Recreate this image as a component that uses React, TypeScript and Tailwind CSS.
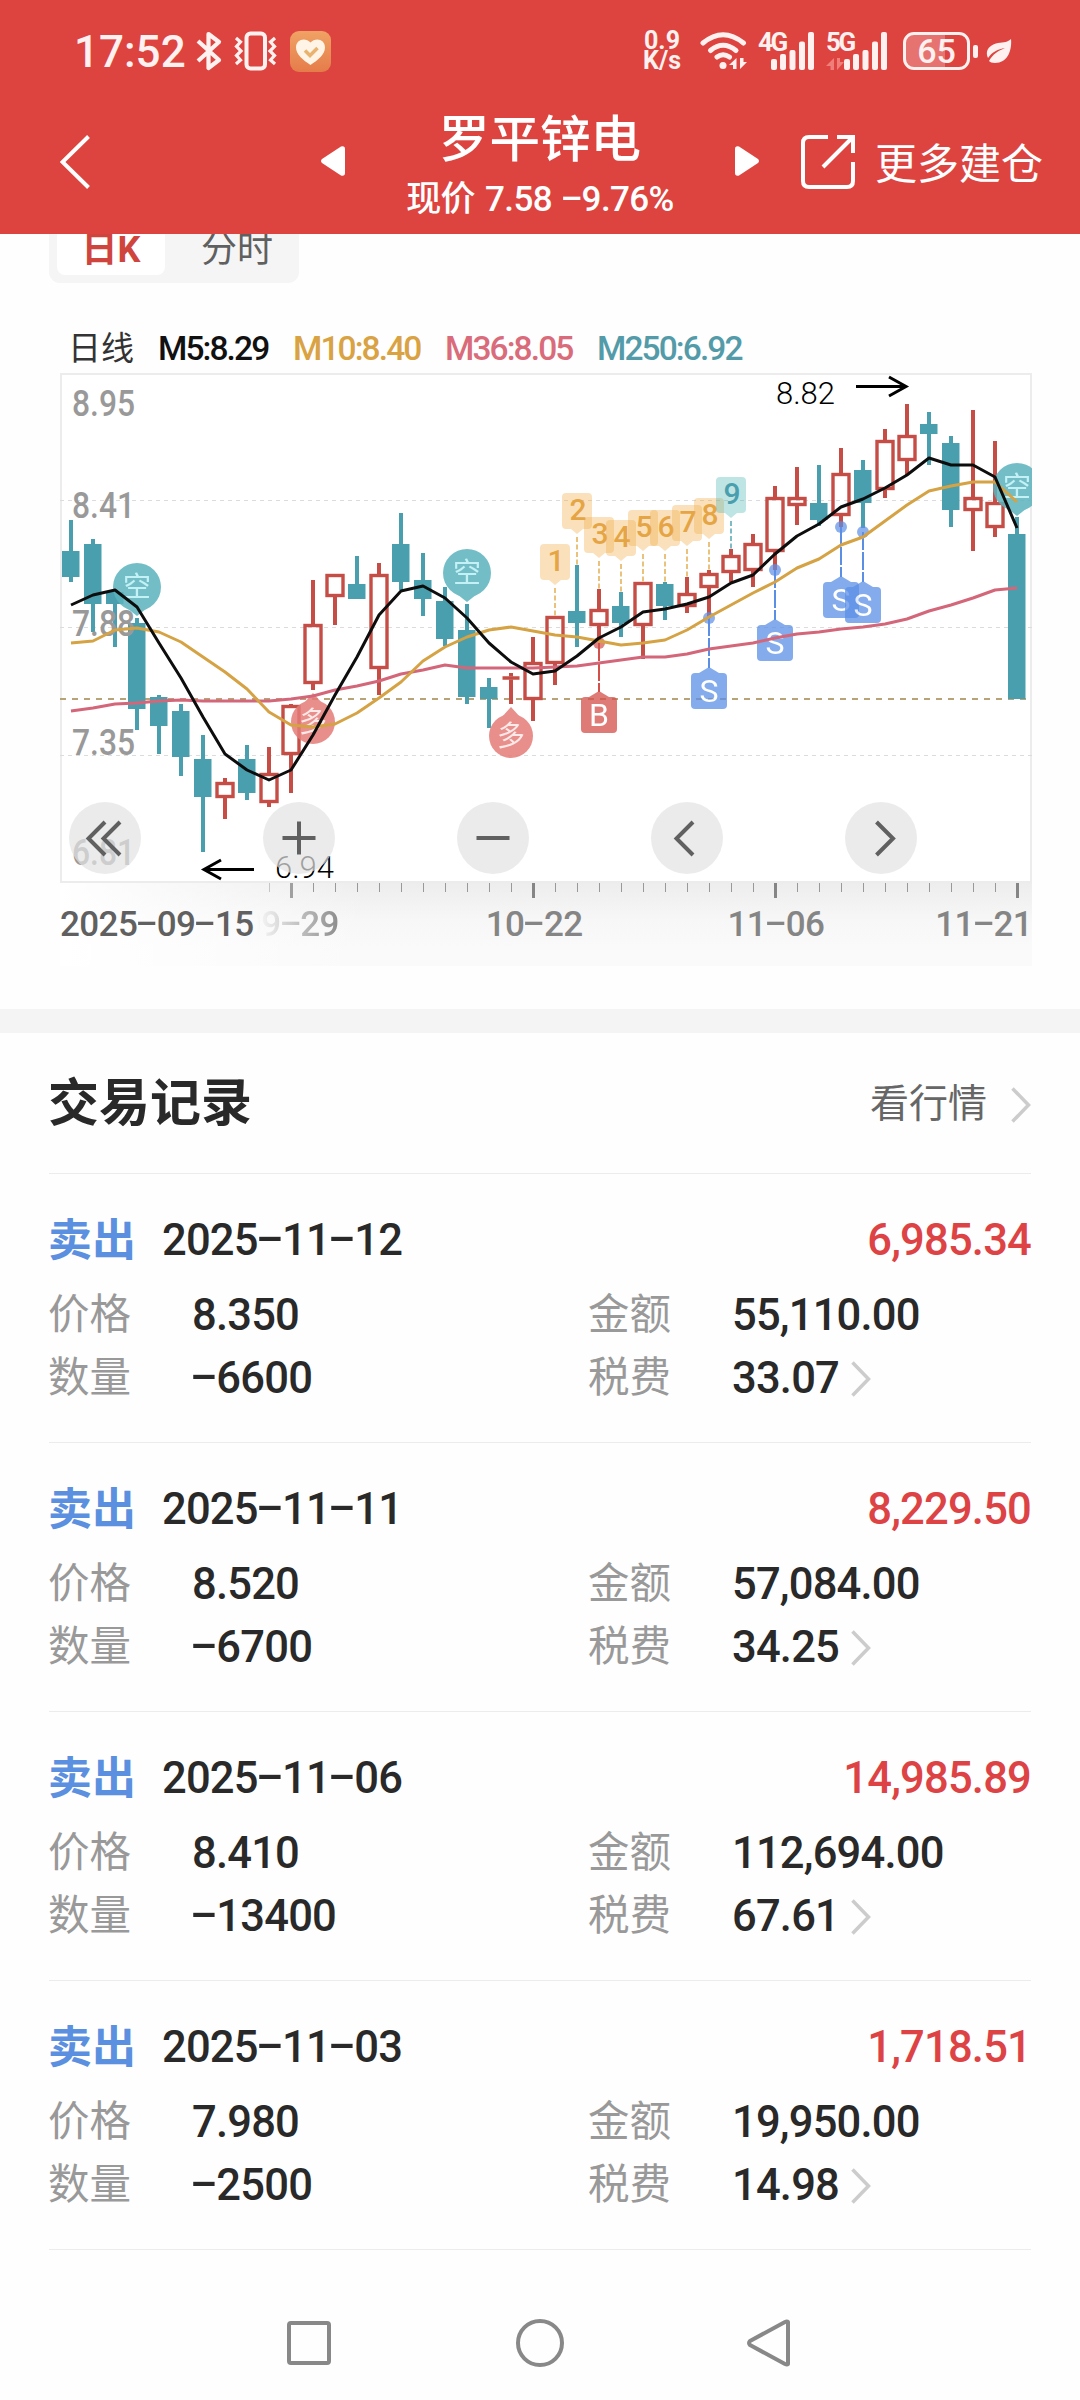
import { Fragment } from "react";

type Candle = [high: number, top: number, bottom: number, low: number, up: boolean];

const candles: Candle[] = [
  [520, 551, 577, 582, false],
  [539, 544, 604, 632, false],
  [590, 592, 604, 647, false],
  [618, 623, 709, 730, false],
  [695, 697, 726, 754, false],
  [704, 711, 757, 776, false],
  [735, 759, 797, 852, false],
  [778, 782, 798, 819, true],
  [745, 759, 793, 800, false],
  [747, 773, 803, 807, true],
  [704, 705, 755, 793, true],
  [580, 624, 684, 690, true],
  [574, 574, 597, 625, true],
  [556, 584, 599, 599, false],
  [563, 574, 669, 695, true],
  [513, 544, 582, 590, false],
  [553, 580, 599, 616, false],
  [587, 601, 639, 646, false],
  [604, 630, 697, 704, false],
  [678, 687, 699, 728, false],
  [673, 676.5, 679.5, 704, true],
  [637, 662, 700, 721, true],
  [616, 616, 664, 685, true],
  [565, 611, 623, 647, false],
  [589, 609, 626, 640, true],
  [592, 606, 623, 637, false],
  [582, 582, 626, 659, true],
  [582, 584, 606, 620, false],
  [577, 593, 607, 613, true],
  [570, 573, 588, 618, true],
  [549, 555, 573, 582, true],
  [534, 543, 571, 587, true],
  [486, 497, 552, 570, true],
  [467, 497, 506, 525, true],
  [465, 503, 520, 526, false],
  [448, 473, 516, 527, true],
  [460, 470, 503, 528, false],
  [429, 440, 490, 498, true],
  [404, 435, 461, 475, true],
  [412, 424, 434, 465, false],
  [436, 443, 510, 527, false],
  [410, 497, 511, 551, true],
  [441, 502, 528, 537, true],
  [517, 534, 699, 699, false],
];

const ma5 = [
  605, 595, 590, 607, 643, 678, 717, 754, 770, 780, 770, 735, 695, 657, 615, 591, 586, 598, 618, 643, 662, 674,
  671, 656, 638, 627, 612, 609, 604, 597, 583, 575, 554, 536, 524, 507, 499, 488, 475, 458, 465, 465, 477, 528,
];
const ma10 = [
  643, 641, 630, 628, 632, 642, 657, 672, 689, 712, 725, 727, 724, 713, 698, 682, 661, 647, 637, 630, 627, 631,
  635, 637, 641, 645, 643, 640, 630, 617, 605, 593, 582, 568, 559, 545, 537, 521, 505, 491, 486, 482, 482, 502,
];
const ma36 = [
  711, 708, 704, 703, 701, 700, 701, 701, 701, 701, 699, 696, 690, 686, 681, 674, 670, 665, 668, 668, 668, 668,
  667, 666, 663, 660, 657, 657, 654, 649, 646, 643, 638, 634, 632, 629, 627, 624, 619, 611, 605, 598, 590, 588,
];

const priceLabels = [
  { text: "8.95", y: 416 },
  { text: "8.41", y: 518 },
  { text: "7.88", y: 636 },
  { text: "7.35", y: 755 },
  { text: "6.81", y: 865 },
];

const counters = [
  { i: 22, n: 1 },
  { i: 23, n: 2 },
  { i: 24, n: 3 },
  { i: 25, n: 4 },
  { i: 26, n: 5 },
  { i: 27, n: 6 },
  { i: 28, n: 7 },
  { i: 29, n: 8 },
  { i: 30, n: 9 },
];

const tradeMarks = [
  { i: 24, dot: 643, box: 697, text: "B" },
  { i: 29, dot: 618, box: 673, text: "S" },
  { i: 32, dot: 570, box: 625, text: "S" },
  { i: 35, dot: 527, box: 582, text: "S" },
  { i: 36, dot: 532, box: 587, text: "S" },
];

const trades = [
  { date: "2025-11-12", profit: "6,985.34", price: "8.350", amount: "55,110.00", qty: "-6600", fee: "33.07" },
  { date: "2025-11-11", profit: "8,229.50", price: "8.520", amount: "57,084.00", qty: "-6700", fee: "34.25" },
  { date: "2025-11-06", profit: "14,985.89", price: "8.410", amount: "112,694.00", qty: "-13400", fee: "67.61" },
  { date: "2025-11-03", profit: "1,718.51", price: "7.980", amount: "19,950.00", qty: "-2500", fee: "14.98" },
];

const px = (i: number) => 71 + i * 22;
const line = (values: number[]) => values.map((y, i) => `${px(i)},${y}`).join(" ");

// Digits are tabular, so the hyphen takes the width of a digit as well
function Num({ children }: { children: string }) {
  return (
    <span className="whitespace-nowrap">
      {children.split("-").map((part, i) => (
        <Fragment key={i}>
          {i > 0 && (
            <span className="inline-block w-[0.56em] -translate-y-[0.06em] scale-x-[1.9] text-center tracking-normal">
              -
            </span>
          )}
          {part}
        </Fragment>
      ))}
    </span>
  );
}

function Chevron() {
  return (
    <svg width="20" height="36" viewBox="0 0 20 36" fill="none" stroke="#cccccc" strokeWidth="3.5">
      <path d="M1.5 1.5L17.5 18L1.5 34.5" />
    </svg>
  );
}

function SignalBars() {
  return (
    <svg width="44" height="38" viewBox="0 0 44 38" fill="#fff1f0">
      <rect x="0" y="27" width="6" height="11" rx="2" />
      <rect x="9" y="22" width="6" height="16" rx="2" />
      <rect x="18.500" y="18" width="6" height="20" rx="2" />
      <rect x="28" y="9.500" width="6" height="28.500" rx="2" />
      <rect x="37" y="0" width="6" height="38" rx="2" />
    </svg>
  );
}

function StatusBar() {
  return (
    <div className="flex h-[102px] items-center pl-[74px] text-[#fff1f0]">
      <span className="w-[122px] pt-[2px] text-[44px] font-medium">17:52</span>
      <svg width="26" height="40" viewBox="0 0 26 40" fill="none" stroke="#fff1f0" strokeWidth="4.200" strokeLinejoin="round">
        <path d="M2 10L23 29L12.500 37V3L23 11L2 30" />
      </svg>
      <svg className="ml-3" width="43" height="40" viewBox="0 0 43 40" fill="none" stroke="#fff1f0" strokeWidth="4">
        <rect x="12.500" y="2.500" width="18.500" height="35" rx="4" />
        <path d="M2 7L6.500 11L2.500 15.500L7 20L2.500 24.500L6.500 29L2 33M41 7L36.500 11L40.500 15.500L36 20L40.500 24.500L36.500 29L41 33" strokeWidth="3.200" />
      </svg>
      <svg className="ml-[13px]" width="41" height="41" viewBox="0 0 41 41">
        <defs>
          <linearGradient id="badge" x1="0" y1="0" x2="0" y2="1">
            <stop offset="0" stopColor="#f0a264" />
            <stop offset="1" stopColor="#e57c4a" />
          </linearGradient>
        </defs>
        <rect width="41" height="41" rx="9" fill="url(#badge)" />
        <path d="M20.500 34C13 29 6 23.500 6 16.500C6 8 15.500 6 20.500 11.500C25.500 6 35 8 35 16.500C35 23.500 28 29 20.500 34Z" fill="#fff4e6" />
        <path d="M15 19.500L20 24.500L27.500 17" fill="none" stroke="#eab26f" strokeWidth="3.500" />
      </svg>

      <div className="ml-[311px] flex w-[40px] flex-col items-center text-[25px] leading-[20px] font-bold">
        <span>0.9</span>
        <span>K/s</span>
      </div>
      <svg className="ml-[18px]" width="47" height="38" viewBox="0 0 47 38" fill="none" stroke="#fff1f0" strokeLinecap="round" strokeWidth="5">
        <path d="M3 11Q23 -5.500 43.500 11" />
        <path d="M10.500 18.500Q23 8 36 18.500" />
        <path d="M17 25Q23 20.500 29.500 25" />
        <circle cx="23" cy="33.500" r="3.500" fill="#fff1f0" stroke="none" />
        <path d="M36.500 26V37H33V33H29ZM40 37V26H43.500V30H47Z" fill="#fff1f0" stroke="none" />
      </svg>
      <span className="ml-[11px] w-[13px] -translate-y-[9px] text-[26px] leading-none font-bold tracking-[-2.500px]">4G</span>
      <SignalBars />
      <div className="ml-[11px] flex h-[38px] w-[18px] flex-col justify-between">
        <span className="-mt-[3px] text-[26px] leading-[26px] font-bold tracking-[-2.500px]">5G</span>
        <svg width="18" height="13" viewBox="0 0 18 13" fill="#f07f7a">
          <path d="M8 1V13H4.500V9H0ZM11 13V1H14V5H18Z" />
        </svg>
      </div>
      <SignalBars />
      <div className="ml-[15px] flex h-[38px] w-[67px] items-center justify-center rounded-[11px] border-[3.500px] border-[#fff1f0] bg-[linear-gradient(90deg,#e77370_64%,transparent_64%)] text-[34px] font-medium">
        65
      </div>
      <div className="ml-[3px] h-[13px] w-[5px] rounded-[2px] bg-[#fff1f0]" />
      <svg className="ml-2" width="26" height="25" viewBox="0 0 26 25">
        <path d="M25 0C26 9 23 24 9 24C6 24 4 23 3 22C7 15 12 12 19 9C12 10 6 13 2 19C-2 11 5 5 12 4C18 3.500 22 3 25 0Z" fill="#fff1f0" />
      </svg>
    </div>
  );
}

function Header() {
  return (
    <header className="relative z-10 h-[234px] bg-[#dd443f] text-white">
      <StatusBar />
      <div className="flex h-[132px] pl-[60px]">
        <svg className="mt-[33px]" width="31" height="54" viewBox="0 0 31 54" fill="none" stroke="#fff" strokeWidth="4">
          <path d="M28.500 1.500L2.500 27L28.500 52.500" />
        </svg>
        <svg className="mt-[44px] ml-[230px]" width="24" height="30" viewBox="0 0 24 30" fill="#fff">
          <path d="M1 13L20 0.500Q24 -0.500 24 3V27Q24 30.500 20 29.500L1 17Q-1 15 1 13Z" />
        </svg>
        <div className="flex w-[390px] flex-col items-center">
          <h1 className="mt-[5px] text-[50.500px] leading-[66px] font-medium">罗平锌电</h1>
          <div className="flex items-center gap-[10px] text-[35px] leading-[54px] font-medium tracking-[-0.600px]">
            <span>现价</span>
            <Num>7.58</Num>
            <Num>-9.76%</Num>
          </div>
        </div>
        <svg className="mt-[44px]" width="24" height="30" viewBox="0 0 24 30" fill="#fff">
          <path d="M23 13L4 0.500Q0 -0.500 0 3V27Q0 30.500 4 29.500L23 17Q25 15 23 13Z" />
        </svg>
        <svg className="mt-[33px] ml-[42px]" width="54" height="54" viewBox="0 0 54 54" fill="none" stroke="#fff" strokeWidth="4">
          <path d="M27 2H8Q2 2 2 8V46Q2 52 8 52H46Q52 52 52 46V27M36 2H52V18M52 2L22 32" />
        </svg>
        <span className="mt-[34px] ml-[20px] text-[42px] leading-[58px] whitespace-nowrap">更多建仓</span>
      </div>
    </header>
  );
}

function Bubble({ x, y, text }: { x: number; y: number; text: string }) {
  const short = text === "空";
  return (
    <g opacity="0.85">
      <path
        d={short ? `M${x - 14} ${y + 18}L${x} ${y + 29}L${x + 14} ${y + 18}Z` : `M${x - 10} ${y - 18}L${x} ${y - 29}L${x + 10} ${y - 18}Z`}
        fill={short ? "#5bb3bd" : "#e47c79"}
      />
      <circle cx={x} cy={y} r={short ? 24 : 22} fill={short ? "#5bb3bd" : "#e47c79"} />
      <text x={x} y={y + 10} textAnchor="middle" fontSize="28" fill={short ? "#b9eff5" : "#fde6e4"}>
        {text}
      </text>
    </g>
  );
}

function KLineChart() {
  return (
    <svg className="block" width="972" height="510" viewBox="60 373 972 510">
      <rect x="61" y="374" width="970" height="508" fill="#fff" stroke="#ececec" strokeWidth="2" />
      <g stroke="#dcdcdc" strokeWidth="1" strokeDasharray="4 4">
        <path d="M60 500.500H1032" />
        <path d="M60 627.500H1032" />
        <path d="M60 755.500H1032" />
      </g>
      <path d="M60 699H1032" stroke="#b8a376" strokeWidth="2" strokeDasharray="6 6" />

      {candles.map(([high, top, bottom, low, up], i) =>
        up ? (
          <g key={i} stroke="#c54d46" fill="none">
            <path d={`M${px(i)} ${high}V${top}M${px(i)} ${bottom}V${low}`} strokeWidth="4" />
            {bottom - top > 4 ? (
              <rect x={px(i) - 8} y={top + 1.5} width="16" height={bottom - top - 3} strokeWidth="3.400" />
            ) : (
              <path d={`M${px(i) - 8.5} ${top + 1.5}h17M${px(i)} ${top}V${bottom}`} strokeWidth="3.400" />
            )}
          </g>
        ) : (
          <g key={i} fill="#4a9fae">
            <rect x={px(i) - 2} y={high} width="4" height={low - high} />
            <rect x={px(i) - 9} y={top} width="17.500" height={bottom - top} />
          </g>
        ),
      )}

      {priceLabels.map((p) => (
        <text key={p.text} x="72" y={p.y} fontSize="36" fontWeight="500" fill="#999999" textLength="63" lengthAdjust="spacingAndGlyphs">
          {p.text}
        </text>
      ))}

      <Bubble x={137} y={587} text="空" />
      <Bubble x={467} y={573} text="空" />
      <Bubble x={1017} y={487} text="空" />
      <Bubble x={313} y={722} text="多" />
      <Bubble x={511} y={736} text="多" />

      {counters.map(({ i, n }) => {
        const x = px(i);
        const y = candles[i][0] - 72;
        const last = n === 9;
        return (
          <g key={n}>
            <path
              d={`M${x - 11} ${y}H${x + 11}Q${x + 15} ${y} ${x + 15} ${y + 4}V${y + 32}Q${x + 15} ${y + 36} ${x + 11} ${y + 36}H${x + 6}L${x} ${y + 41}L${x - 6} ${y + 36}H${x - 11}Q${x - 15} ${y + 36} ${x - 15} ${y + 32}V${y + 4}Q${x - 15} ${y} ${x - 11} ${y}Z`}
              fill={last ? "#4db3b5" : "#f0ad45"}
              opacity="0.36"
            />
            <text x={x + 1} y={y + 27} textAnchor="middle" fontSize="30" fontWeight="500" fill={last ? "#4a9fae" : "#e6a545"}>
              {n}
            </text>
            <path d={`M${x} ${y + 44}V${y + 72}`} stroke={last ? "#7dbcc5" : "#eac27c"} strokeWidth="2" strokeDasharray="5 2.500" />
          </g>
        );
      })}

      {tradeMarks.map(({ i, dot, box, text }) => {
        const x = px(i);
        const color = text === "B" ? "#d44f4a" : "#5b8fe6";
        return (
          <g key={i}>
            <circle cx={x} cy={dot} r="6" fill={color} opacity="0.7" />
            <path d={`M${x} ${dot}V${box - 5}`} stroke={color} strokeWidth="2" strokeDasharray="18 2" />
            <g opacity="0.75">
              <rect x={x - 18} y={box} width="36" height="36" rx="4" fill={color} />
              <path d={`M${x - 10} ${box}L${x} ${box - 6}L${x + 10} ${box}Z`} fill={color} />
              <text x={x} y={box + 29} textAnchor="middle" fontSize="32" fill="#fff">
                {text}
              </text>
            </g>
          </g>
        );
      })}

      <g fill="none" strokeWidth="3" strokeLinejoin="round">
        <polyline points={line(ma36)} stroke="#d4667a" />
        <polyline points={line(ma10)} stroke="#d5a244" />
        <polyline points={line(ma5)} stroke="#0d0d0d" />
      </g>

      <g fill="none" stroke="#000" strokeWidth="3">
        <path d="M856 386.500H906M889 377L906 386.500L889 396" />
        <path d="M254 869.500H204M221 860L204 869.500L221 879" />
      </g>
      <text x="776" y="403.500" fontSize="32" fontWeight="300" fill="#000" textLength="59" lengthAdjust="spacingAndGlyphs">
        8.82
      </text>
      <text x="275" y="878" fontSize="32" fontWeight="300" fill="#000" textLength="59" lengthAdjust="spacingAndGlyphs">
        6.94
      </text>

      {[105, 299, 493, 687, 881].map((x) => (
        <circle key={x} cx={x} cy="838" r="36" fill="#e3e3e3" opacity="0.7" />
      ))}
      <g fill="none" stroke="#606060" strokeWidth="4">
        <path d="M105 822L88.500 838.500L105 855M120 822L103.500 838.500L120 855" />
        <path d="M282.500 838H315.500M299 821.500V854.500" />
        <path d="M476.500 838H509.500" />
        <path d="M693 822L676.500 838.500L693 855" />
        <path d="M876.500 822L893 838.500L876.500 855" />
      </g>
    </svg>
  );
}

function TimeAxis() {
  return (
    <div className="h-[83px] bg-[linear-gradient(90deg,#fff,transparent_32%),linear-gradient(180deg,#ededed,#f7f7f7_45%,#fafafa_80%)]">
      <svg className="block" width="972" height="16" viewBox="60 883 972 16">
        {candles.map((_, i) =>
          i < 9 ? null : (i - 10) % 11 === 0 ? (
            <path key={i} d={`M${px(i) + 0.5} 883V898`} stroke="#858585" strokeWidth="3" opacity={i === 10 ? 0.75 : 1} />
          ) : (
            <path key={i} d={`M${px(i) + 0.5} 883V892`} stroke="#999999" strokeWidth="1" opacity={i === 9 ? 0.5 : 1} />
          ),
        )}
      </svg>
      <div className="flex pt-[6px] text-[35px] leading-[40px] font-medium tracking-[-0.600px] text-[#858585]">
        <div className="w-[182px] text-[#606060]">
          <Num>2025-09-15</Num>
        </div>
        <div className="w-[244px] [mask-image:linear-gradient(90deg,transparent_6%,black_42%)]">
          <Num>09-29</Num>
        </div>
        <div className="w-[242px]">
          <Num>10-22</Num>
        </div>
        <div className="w-[208px]">
          <Num>11-06</Num>
        </div>
        <Num>11-21</Num>
      </div>
    </div>
  );
}

function TradeRow({ trade }: { trade: (typeof trades)[number] }) {
  return (
    <div className="h-[269px] border-b border-[#ececec] pt-[35px] text-[43.500px] font-medium tracking-[-0.800px] text-[#292929]">
      <div className="flex h-[64px] items-center">
        <span className="-ml-px w-[114px] text-[44px] font-bold tracking-normal text-[#5b8fdf]">卖出</span>
        <Num>{trade.date}</Num>
        <span className="ml-auto text-[#dd4345]">{trade.profit}</span>
      </div>
      <div className="mt-[11px] grid grid-cols-[143px_397px_143px_1fr] auto-rows-[63px] items-center">
        <span className="-ml-px text-[41.500px] font-normal tracking-normal text-[#999999]">价格</span>
        <span>{trade.price}</span>
        <span className="-ml-px text-[41.500px] font-normal tracking-normal text-[#999999]">金额</span>
        <span>{trade.amount}</span>
        <span className="-ml-px text-[41.500px] font-normal tracking-normal text-[#999999]">数量</span>
        <Num>{trade.qty}</Num>
        <span className="-ml-px text-[41.500px] font-normal tracking-normal text-[#999999]">税费</span>
        <span className="flex items-center gap-3">
          {trade.fee}
          <Chevron />
        </span>
      </div>
    </div>
  );
}

export default function App() {
  return (
    <div className="h-[2400px] w-[1080px] overflow-hidden bg-[#fefefe] font-['Roboto','Noto_Sans_CJK_SC',sans-serif]">
      <Header />

      <div className="-mt-[22px] ml-[49px] flex h-[71px] w-[250px] rounded-[11px] bg-[#f5f5f5] p-2 text-[36px] leading-[60px]">
        <div className="w-[108px] rounded-[8px] bg-white text-center font-bold text-[#d0443e]">日K</div>
        <div className="flex-1 pl-[36px] text-[#606060]">分时</div>
      </div>

      <div className="mt-[42px] ml-[68px] flex h-[48px] items-center text-[33.500px] font-medium tracking-[-1.900px] whitespace-nowrap">
        <span className="w-[90px] text-[33px] font-normal tracking-normal text-[#333333]">日线</span>
        <span className="w-[135px] text-[#111111]">M5:8.29</span>
        <span className="w-[152px] text-[#d9a243]">M10:8.40</span>
        <span className="w-[152px] text-[#d96b7a]">M36:8.05</span>
        <span className="text-[#539ba8]">M250:6.92</span>
      </div>

      <div className="ml-[60px] w-[972px]">
        <KLineChart />
        <TimeAxis />
      </div>

      <div className="mt-[43px] h-6 bg-[#f4f4f4]" />

      <section className="px-[49px]">
        <div className="flex h-[141px] items-center justify-between border-b border-[#ececec] pt-[3px]">
          <h2 className="-ml-px text-[51px] font-bold text-[#292929]">交易记录</h2>
          <div className="flex items-center gap-6 text-[39px] text-[#666666]">
            看行情
            <Chevron />
          </div>
        </div>
        {trades.map((trade) => (
          <TradeRow key={trade.date} trade={trade} />
        ))}
      </section>

      <nav className="flex justify-center gap-[183px] pt-[69px]">
        <svg width="48" height="48" viewBox="0 0 48 48" fill="none" stroke="#888888" strokeWidth="4">
          <rect x="4" y="4" width="40" height="40" rx="2" />
        </svg>
        <svg width="48" height="48" viewBox="0 0 48 48" fill="none" stroke="#888888" strokeWidth="4">
          <circle cx="24" cy="24" r="22" />
        </svg>
        <svg width="48" height="48" viewBox="0 0 48 48" fill="none" stroke="#888888" strokeWidth="4" strokeLinejoin="round">
          <path d="M41 3V45Q40 46 38 45L3 26Q1 24 3 22L38 3Q40 2 41 3Z" />
        </svg>
      </nav>
    </div>
  );
}
